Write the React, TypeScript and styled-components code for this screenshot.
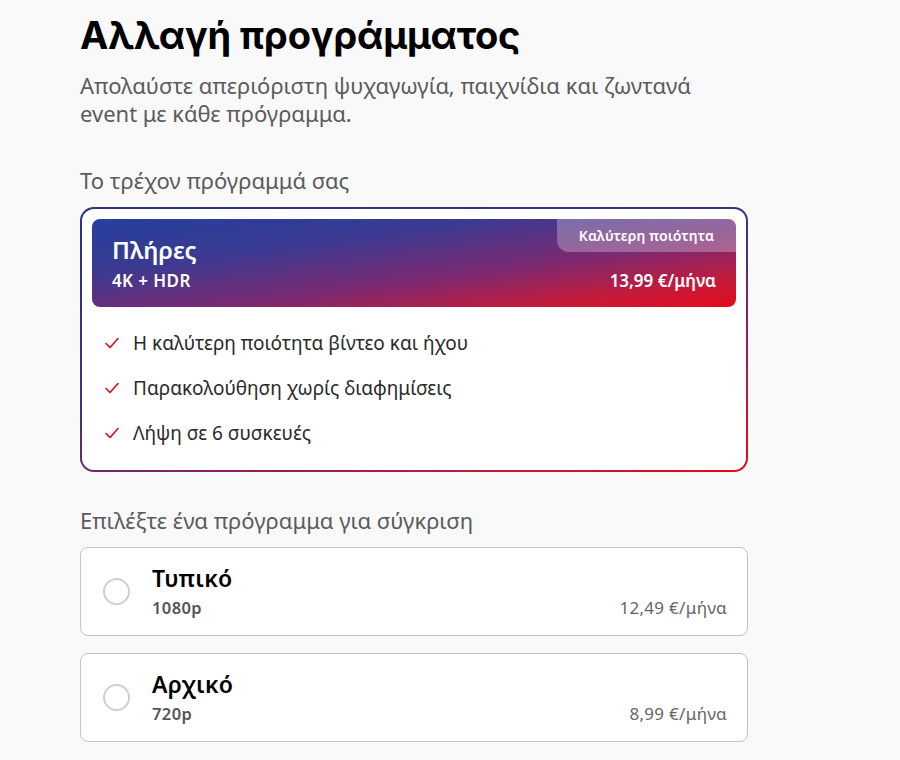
import React from 'react';
import styled, { createGlobalStyle } from 'styled-components';

const GlobalStyle = createGlobalStyle`
  html, body {
    margin: 0;
    padding: 0;
    background: #f9f9f9;
  }
  body {
    font-family: "Noto Sans", Roboto, "Liberation Sans", sans-serif;
    color: #222;
  }
`;

const Page = styled.div`
  width: 668px;
  padding: 12px 0 0 80px;
  display: flex;
  flex-direction: column;
`;

const Title = styled.h1`
  margin: 0;
  font-family: Inter, "Noto Sans", sans-serif;
  font-size: 38px;
  font-weight: 700;
  line-height: 46px;
  color: #000;
  letter-spacing: -0.2px;
`;

const Subtitle = styled.p`
  margin: 13px 0 0;
  font-size: 22px;
  line-height: 28px;
  color: #5b5b5b;
  white-space: nowrap;
`;

const SectionLabel = styled.div<{ $top: number }>`
  margin: ${(p) => p.$top}px 0 13px;
  font-size: 22px;
  line-height: 28px;
  color: #5b5b5b;
`;

const CurrentCard = styled.div`
  border: 2px solid transparent;
  border-radius: 14px;
  background:
    linear-gradient(#fff, #fff) padding-box,
    linear-gradient(165deg, #28337e 0%, #3a3484 45%, #c2183a 85%, #e50914 100%) border-box;
  padding: 10px 10px 25px;
`;

const Banner = styled.div`
  position: relative;
  border-radius: 8px;
  height: 88px;
  box-sizing: border-box;
  padding: 16px 20px 0;
  background: linear-gradient(to bottom right, #263f9e 0%, #3a3a92 30%, #7a2a72 60%, #c81a38 85%, #e30b1b 100%);
  color: #fff;
  display: flex;
  flex-direction: column;
`;

const Badge = styled.div`
  position: absolute;
  top: 0;
  right: 0;
  height: 33px;
  padding: 0 22px;
  display: flex;
  align-items: center;
  font-size: 14px;
  font-weight: 600;
  letter-spacing: 0.1px;
  background: rgba(255, 255, 255, 0.28);
  border-radius: 0 8px 0 12px;
`;

const PlanName = styled.div`
  font-size: 24px;
  font-weight: 600;
  line-height: 30px;
`;

const BannerRow = styled.div`
  display: flex;
  justify-content: space-between;
  align-items: baseline;
  font-size: 17px;
  font-weight: 600;
  line-height: 22px;
  margin-top: 5px;
`;

const HdrTag = styled.span`
  letter-spacing: 0.4px;
`;

const Features = styled.ul`
  list-style: none;
  margin: 24px 0 0;
  padding: 0 0 0 12px;
  display: flex;
  flex-direction: column;
  gap: 21px;
`;

const Feature = styled.li`
  display: flex;
  align-items: center;
  gap: 13px;
  font-size: 19px;
  line-height: 24px;
  color: #2a2a2a;
`;

const Check = () => (
  <svg width="16" height="16" viewBox="0 0 16 16" fill="none">
    <path d="M2 8.5L6 12.5L14 3.5" stroke="#e50914" strokeWidth="1.6" strokeLinecap="round" strokeLinejoin="round" />
  </svg>
);

const Options = styled.div`
  display: flex;
  flex-direction: column;
  gap: 17px;
`;

const Option = styled.label`
  height: 89px;
  box-sizing: border-box;
  border: 1px solid #c4c4c4;
  border-radius: 8px;
  background: #fff;
  display: flex;
  align-items: center;
  padding: 0 20px 0 22px;
  gap: 22px;
  cursor: pointer;
`;

const Radio = styled.span`
  width: 27px;
  height: 27px;
  border-radius: 50%;
  border: 2px solid #cfcfcf;
  box-sizing: border-box;
  flex-shrink: 0;
`;

const OptionBody = styled.div`
  flex: 1;
  display: flex;
  flex-direction: column;
`;

const OptionName = styled.div`
  font-size: 23px;
  font-weight: 600;
  line-height: 28px;
  letter-spacing: 0.3px;
  color: #000;
`;

const OptionRow = styled.div`
  display: flex;
  justify-content: space-between;
  align-items: baseline;
  margin-top: 5px;
  line-height: 22px;
`;

const Resolution = styled.span`
  font-size: 16.5px;
  font-weight: 600;
  letter-spacing: 0.4px;
  color: #555;
`;

const Price = styled.span`
  font-size: 17px;
  letter-spacing: 0.3px;
  color: #666;
`;

const features = [
  'Η καλύτερη ποιότητα βίντεο και ήχου',
  'Παρακολούθηση χωρίς διαφημίσεις',
  'Λήψη σε 6 συσκευές',
];

const plans = [
  { name: 'Τυπικό', res: '1080p', price: '12,49 €/μήνα' },
  { name: 'Αρχικό', res: '720p', price: '8,99 €/μήνα' },
];

export default function App() {
  return (
    <>
      <GlobalStyle />
      <Page>
        <Title>Αλλαγή προγράμματος</Title>
        <Subtitle>
          Απολαύστε απεριόριστη ψυχαγωγία, παιχνίδια και ζωντανά
          <br />
          event με κάθε πρόγραμμα.
        </Subtitle>

        <SectionLabel $top={39}>Το τρέχον πρόγραμμά σας</SectionLabel>
        <CurrentCard>
          <Banner>
            <Badge>Καλύτερη ποιότητα</Badge>
            <PlanName>Πλήρες</PlanName>
            <BannerRow>
              <HdrTag>4K + HDR</HdrTag>
              <span>13,99 €/μήνα</span>
            </BannerRow>
          </Banner>
          <Features>
            {features.map((f) => (
              <Feature key={f}>
                <Check />
                {f}
              </Feature>
            ))}
          </Features>
        </CurrentCard>

        <SectionLabel $top={34}>Επιλέξτε ένα πρόγραμμα για σύγκριση</SectionLabel>
        <Options>
          {plans.map((p) => (
            <Option key={p.name}>
              <Radio />
              <OptionBody>
                <OptionName>{p.name}</OptionName>
                <OptionRow>
                  <Resolution>{p.res}</Resolution>
                  <Price>{p.price}</Price>
                </OptionRow>
              </OptionBody>
            </Option>
          ))}
        </Options>
      </Page>
    </>
  );
}
